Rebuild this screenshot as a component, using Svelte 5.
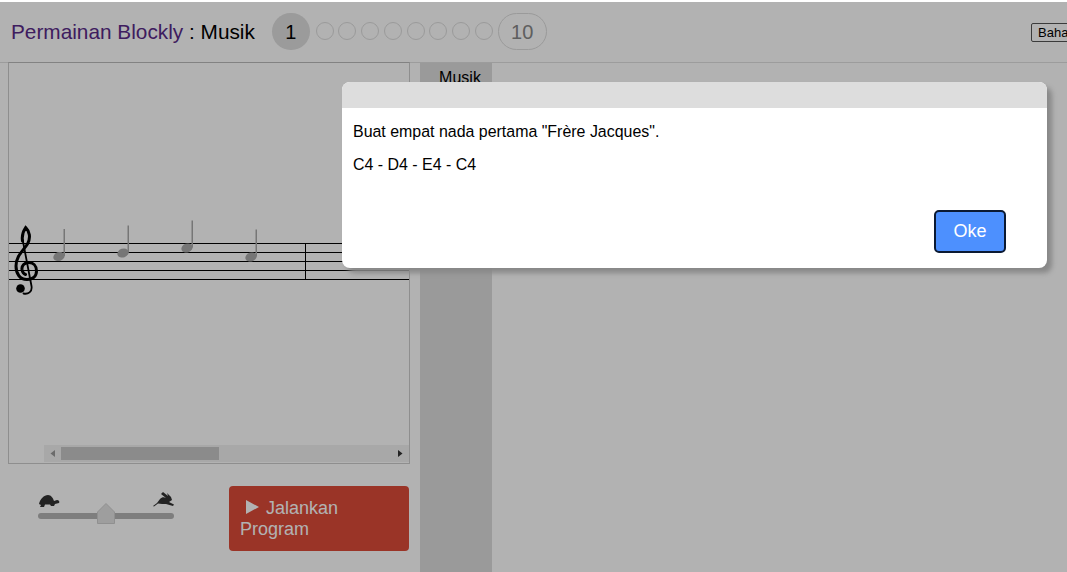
<script>
  const staffLines = [243, 252, 261, 270, 279];
  const notes = [
    { x: 59, y: 256.5 },
    { x: 123, y: 253 },
    { x: 187, y: 248 },
    { x: 251, y: 257 }
  ];
  const levels = [2, 3, 4, 5, 6, 7, 8, 9];
</script>

<div class="page">
  <header class="top">
    <h1 class="title"><span class="game">Permainan Blockly</span> : Musik</h1>
    <div class="levels">
      <span class="level current">1</span>
      {#each levels as level}
        <span class="dot" title={"Level " + level}></span>
      {/each}
      <span class="level last">10</span>
    </div>
    <select class="lang">
      <option>Bahasa Indonesia</option>
    </select>
  </header>

  <main class="main">
    <section class="left">
      <div class="score">
        <svg class="staff" width="400" height="400" viewBox="9 63 400 400">
          {#each staffLines as y}
            <line x1="9" x2="409" y1={y + 0.5} y2={y + 0.5} stroke="#000" />
          {/each}
          <line x1="305.5" x2="305.5" y1="243" y2="280" stroke="#000" />
          <g fill="none" stroke="#000" stroke-linecap="round">
            <path stroke-width="3" d="M22.500 241C21.500 235 24 230 25.700 227.500C29.500 231 31 238 27.500 244C23 251 16 256 16 266C16 274 20 279.500 27 279.500C33 279.500 36.500 276 36.500 271C36.500 265.500 33 262.500 29 262.500C24.500 262.500 21.500 265.500 22 269.500C22.500 272.500 24 274 25.500 274.500" />
            <path stroke-width="1.8" d="M22.700 240L31.500 286C32.500 292 28 294.500 23.500 293.500" />
          </g>
          <circle cx="20.500" cy="288.500" r="4.300" fill="#000" />
          {#each notes as note}
            <g fill="#aaa">
              <ellipse cx={note.x} cy={note.y} rx="5.800" ry="4.400" transform="rotate(-20 {note.x} {note.y})" />
              <rect x={note.x + 4.5} y={note.y - 27.5} width="1.500" height="27" />
            </g>
          {/each}
        </svg>
        <div class="scrollbar">
          <svg class="arrow" width="17" height="17" viewBox="0 0 17 17"><path d="M11 5v7L6.500 8.500z" fill="#9a9a9a" /></svg>
          <div class="track"><div class="thumb"></div></div>
          <svg class="arrow" width="17" height="17" viewBox="0 0 17 17"><path d="M6 5v7l4.500-3.500z" fill="#333" /></svg>
        </div>
      </div>

      <div class="controls">
        <div class="speed">
          <svg width="136" height="34" viewBox="0 0 136 34">
            <path fill="#333" d="M1 12C2 7 6 3 10 3C13 3 15 6 16 9L19 8C21 8 22 10 21 11L17 12L16 14L13 14L12 12.500L7 12.500L6 15L2 15L3 13z" />
            <path fill="#333" d="M115 14L119 11L122 7C124 5 126 5 128 6L123 2L125 0L130 4L129 1L133 5L134 8L131 10L136 12.500L135 14L128 12L124 12L120 11.500L116 14.500z" />
            <rect x="0" y="21" width="136" height="6" rx="3" fill="#b5b5b5" />
          </svg>
          <svg class="knob" width="20" height="24" viewBox="0 0 20 24">
            <path d="M1.500 10L10 1.500L18.500 10V21.500H1.500z" fill="#e2e2e2" stroke="#cfcfcf" />
          </svg>
        </div>
        <button class="run">
          <svg width="13" height="14" viewBox="0 0 13 14"><path d="M0 0L13 7L0 14z" fill="#fff" /></svg>
          Jalankan Program
        </button>
      </div>
    </section>

    <section class="workspace">
      <div class="toolbox">
        <div class="category">Musik</div>
      </div>
    </section>
  </main>

  <div class="overlay"></div>

  <div class="dialog">
    <div class="dialog-head"></div>
    <div class="dialog-body">
      <p>Buat empat nada pertama "Frère Jacques".</p>
      <p>C4 - D4 - E4 - C4</p>
      <div class="actions">
        <button class="ok">Oke</button>
      </div>
    </div>
  </div>
</div>

<style>
  :global(body) {
    background: #fff;
    overflow: hidden;
  }

  .page {
    position: relative;
    width: 1067px;
    height: 572px;
    overflow: hidden;
    font-family: "Liberation Sans", Arial, sans-serif;
    color: #000;
  }

  .top {
    display: flex;
    align-items: center;
    height: 63px;
    box-sizing: border-box;
    padding: 2px 0 0 11px;
    border-bottom: 1px solid #e0e0e0;
  }

  .title {
    margin: 0;
    font-size: 20.800px;
    font-weight: 400;
    white-space: nowrap;
  }

  .game {
    color: #5a2a88;
  }

  .levels {
    display: flex;
    align-items: center;
    gap: 4.750px;
    margin: -2px 0 0 17px;
  }

  .level {
    display: flex;
    align-items: center;
    justify-content: center;
    box-sizing: border-box;
    height: 37px;
    padding-top: 2px;
    border-radius: 19px;
    font-size: 20px;
  }

  .current {
    width: 38px;
    margin-right: 1px;
    background: #dedede;
  }

  .last {
    width: 49px;
    border: 1px solid #ddd;
    color: #888;
  }

  .dot {
    width: 18px;
    height: 18px;
    box-sizing: border-box;
    border: 1px solid #ddd;
    border-radius: 50%;
  }

  .lang {
    flex: none;
    width: 130px;
    height: 19px;
    margin-left: auto;
    margin-right: -94px;
    font-family: "Liberation Sans", Arial, sans-serif;
    font-size: 13px;
    padding: 0 0 0 2px;
    background: #fff;
    border: 1px solid #555;
    border-radius: 2px;
  }

  .main {
    display: flex;
    height: 509px;
  }

  .left {
    flex: none;
    width: 402px;
    margin: -1px 10px 0 8px;
  }

  .score {
    position: relative;
    width: 400px;
    height: 400px;
    border: 1px solid #ccc;
    border-top-color: #bbb;
  }

  .staff {
    display: block;
  }

  .scrollbar {
    position: absolute;
    left: 35px;
    right: 0;
    bottom: 1px;
    height: 17px;
    display: flex;
    background: #f1f1f1;
  }

  .arrow {
    flex: none;
  }

  .track {
    flex: 1;
    padding: 2px 0;
  }

  .thumb {
    width: 158px;
    height: 13px;
    background: #c8c8c8;
  }

  .controls {
    display: flex;
    justify-content: space-between;
    margin-top: 22px;
  }

  .speed {
    position: relative;
    width: 136px;
    height: 34px;
    margin: 6px 0 0 30px;
  }

  .knob {
    position: absolute;
    left: 58px;
    top: 10px;
  }

  .run {
    box-sizing: border-box;
    width: 180px;
    height: 65px;
    margin-right: 1px;
    padding: 0 11px;
    text-align: left;
    background: #dd4b39;
    border: none;
    border-radius: 4px;
    color: #fff;
    font-family: "Liberation Sans", Arial, sans-serif;
    font-size: 18px;
    line-height: 21px;
  }

  .run svg {
    margin: 0 2px 0 6px;
  }

  .workspace {
    flex: 1;
  }

  .toolbox {
    width: 72px;
    height: 100%;
    background: #ddd;
  }

  .category {
    padding: 6px 0 0 8px;
    text-align: center;
    font-size: 16px;
    line-height: 18px;
    background: #ddd;
  }

  .overlay {
    position: absolute;
    inset: 2px 0 0;
    background: rgba(0, 0, 0, 0.3);
  }

  .dialog {
    position: absolute;
    left: 342px;
    top: 82px;
    width: 705px;
    height: 186px;
    background: #fff;
    border-radius: 8px;
    box-shadow: 5px 5px 5px #888;
    overflow: hidden;
  }

  .dialog-head {
    height: 26px;
    background: #ddd;
  }

  .dialog-body {
    padding: 0 11px;
    font-size: 15.950px;
  }

  .dialog-body p {
    margin: 0;
    padding-top: 15px;
    line-height: 18px;
  }

  .actions {
    display: flex;
    justify-content: flex-end;
    padding: 36px 30px 0 0;
  }

  .ok {
    width: 72px;
    height: 43px;
    background: #4d90fe;
    border: 2px solid #0b1a33;
    border-radius: 5px;
    color: #fff;
    font-family: "Liberation Sans", Arial, sans-serif;
    font-size: 18px;
    padding: 0;
  }
</style>
